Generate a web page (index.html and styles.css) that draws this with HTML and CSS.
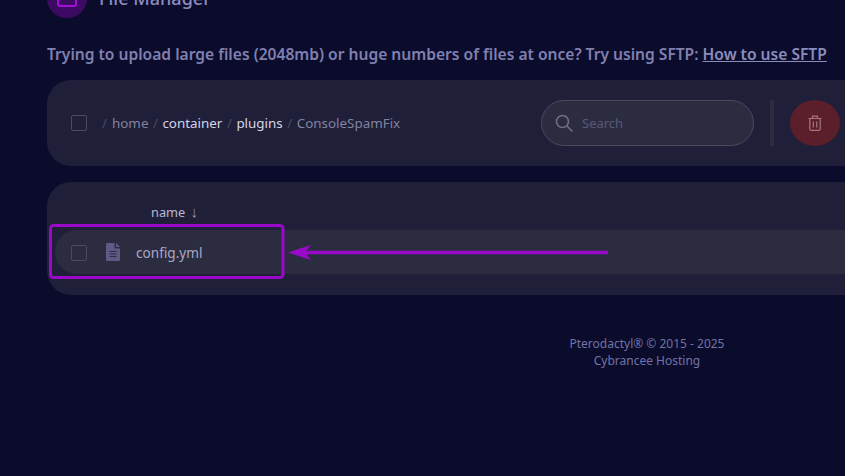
FILE: index.html
```html
<!DOCTYPE html>
<html lang="en">
<head>
<meta charset="utf-8">
<title>File Manager</title>
<link rel="stylesheet" href="styles.css">
</head>
<body>
<main class="page">
  <header class="title-row">
    <div class="title-icon">
      <svg width="20" height="20" viewBox="0 0 20 20" fill="none" stroke="#a20fd6" stroke-width="2"><rect x="1" y="1" width="18" height="17" rx="2"/><path d="M1 9h18"/></svg>
    </div>
    <h1 class="title">File Manager</h1>
  </header>
  <p class="notice">Trying to upload large files (2048mb) or huge numbers of files at once? Try using SFTP: <a class="notice-link" href="#">How to use SFTP</a></p>
  <section class="panel toolbar">
    <span class="checkbox"></span>
    <nav class="crumbs">
      <span class="sep first">/</span><span class="dim">home</span><span class="sep">/</span><span class="bright">container</span><span class="sep">/</span><span class="bright">plugins</span><span class="sep">/</span><span class="dim">ConsoleSpamFix</span>
    </nav>
    <label class="search">
      <svg class="search-icon" width="18" height="18" viewBox="0 0 18 18" fill="none" stroke="#6f7085" stroke-width="1.6" stroke-linecap="round"><circle cx="7.500" cy="7.500" r="6"/><path d="M12 12l5 5"/></svg>
      <span class="search-text">Search</span>
    </label>
    <span class="divider"></span>
    <button class="delete" type="button">
      <svg width="14" height="16" viewBox="0 0 14 16" fill="none" stroke="#a5757e" stroke-width="1.2"><path d="M0.500 3.500h13M4.500 3.500V1.200h5v2.300"/><rect x="1.800" y="3.500" width="10.400" height="11.800" rx="1.400"/><path d="M5.300 6.500v6M8.700 6.500v6"/></svg>
    </button>
  </section>
  <section class="panel files">
    <div class="files-head">name <span class="sort">↓</span></div>
    <div class="file-row">
      <span class="checkbox row-check"></span>
      <svg class="file-icon" width="14" height="18" viewBox="0 0 14 18"><path fill="#5d5a85" d="M0 1a1 1 0 0 1 1-1h7.500v5.500h5.500v11.500a1 1 0 0 1-1 1H1a1 1 0 0 1-1-1z"/><path fill="#5d5a85" d="M10 0l4 4h-4z"/><path stroke="#2d2d41" stroke-width="1.100" d="M3.500 8.500h7M3.500 11h7M3.500 13.500h7"/></svg>
      <span class="file-name">config.yml</span>
    </div>
  </section>
  <footer class="footer">
    <div>Pterodactyl® © 2015 - 2025</div>
    <div>Cybrancee Hosting</div>
  </footer>
</main>
<svg class="annotation" width="845" height="476" viewBox="0 0 845 476" fill="#9a09c9">
  <rect x="50.500" y="225.500" width="232.500" height="52" rx="3" fill="none" stroke="#9a09c9" stroke-width="3"/>
  <path d="M608 250.700h-304v3.600h304z"/>
  <path d="M288 252.500l23-7.500-6 7.500 6 7.500z"/>
</svg>
</body>
</html>
```

FILE: styles.css
```css
* { box-sizing: border-box; }
html, body { margin: 0; height: 100%; }
body {
  background: #0b0c2c;
  overflow: hidden;
  position: relative;
  font-family: "Noto Sans", "Open Sans", sans-serif;
}
.page { width: 1300px; padding: 0 0 0 47px; margin-top: -22px; }
.title-row { display: flex; align-items: center; gap: 12px; height: 40px; }
.title-icon {
  width: 40px; height: 40px; border-radius: 50%;
  background: #3d0a63;
  display: flex; align-items: center; justify-content: center;
}
.title { margin: 0; font-size: 18px; font-weight: 500; color: #8c8cc0; line-height: 40px; }
.notice {
  margin: 25px 0 0;
  font-size: 15.58px; line-height: 22px; font-weight: 600; color: #8080b0;
  white-space: nowrap;
}
.notice-link { color: #8c8cbc; text-decoration: underline; }
.panel { background: #1f1f3a; border-radius: 24px; width: 900px; }
.toolbar {
  margin-top: 15px; height: 86px;
  display: flex; align-items: center;
  padding-left: 24px;
}
.checkbox {
  display: block; flex: none; width: 16px; height: 16px;
  border: 1px solid #4b4b60; border-radius: 2px;
}
.row-check { margin-top: 2px; }
.crumbs { display: flex; align-items: center; margin-left: 15px; width: 439px; font-size: 13.4px; line-height: 20px; }
.sep { color: #4a4a63; margin: 0 4.5px; }
.sep.first { margin-left: 0; margin-right: 5px; }
.dim { color: #83839f; }
.bright { color: #d6d6e6; }
.search {
  flex: none; width: 213px; height: 46px; margin-left: 0;
  display: flex; align-items: center;
  background: #2c2c41; border: 1px solid #4a4a5e; border-radius: 23px;
  padding-left: 13px;
}
.search-text { margin-left: 9px; font-size: 13px; color: #58587a; }
.divider { flex: none; width: 4px; height: 46px; margin-left: 16px; background: #2c2c41; }
.delete {
  flex: none; width: 50px; height: 46px; margin-left: 16px; padding: 0;
  border: 0; border-radius: 50%; background: #5a1f2b;
  display: flex; align-items: center; justify-content: center;
}
.files { margin-top: 16px; height: 113px; padding-top: 19px; }
.files-head { margin-left: 104px; height: 29px; font-size: 12.8px; line-height: 20px; color: #b8b8d0; }
.sort { color: #9c9cb8; font-size: 15px; margin-left: 2px; }
.file-row {
  margin-left: 8px; height: 44px;
  display: flex; align-items: center;
  background: #2c2c41; border-radius: 22px 0 0 22px;
  padding-left: 16px;
}
.file-icon { margin-left: 19px; flex: none; }
.file-name { margin-left: 16px; font-size: 13.6px; color: #a8a8c8; }
.footer {
  margin-top: 40px; width: 1200px;
  text-align: center; font-size: 12px; line-height: 17px; color: #7272a6;
}
.annotation { position: absolute; left: 0; top: 0; pointer-events: none; }
```
